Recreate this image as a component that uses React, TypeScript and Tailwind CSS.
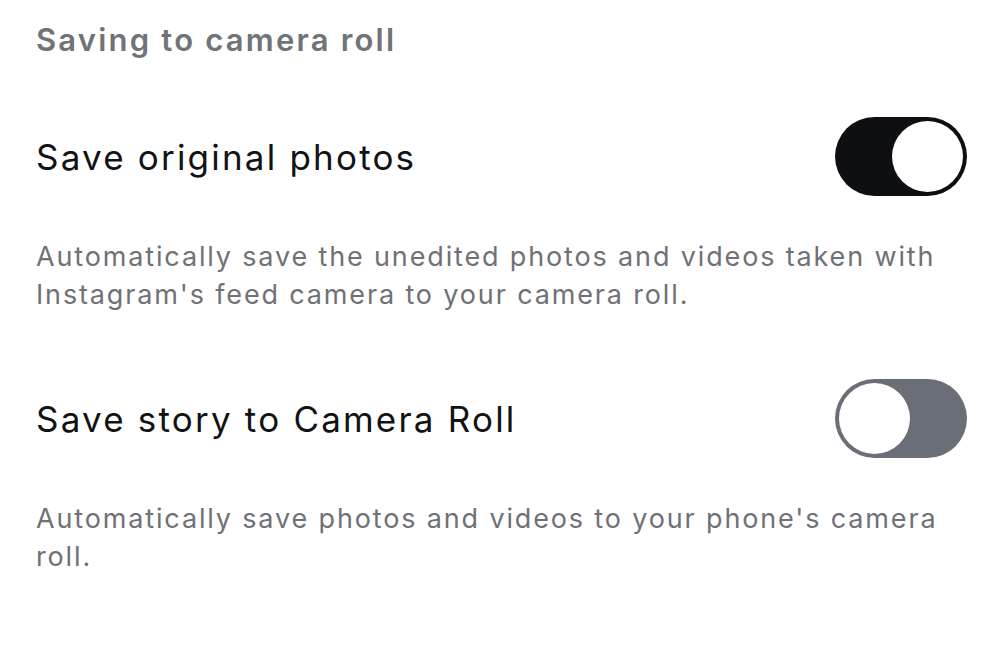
const Toggle = ({ on }: { on: boolean }) => {
  return (
    <div
      className={
        on
          ? "w-[132px] h-[79px] rounded-full bg-[#0d0f12] p-[4px] flex justify-end shrink-0"
          : "w-[132px] h-[79px] rounded-full bg-[#6a6e77] p-[4px] flex justify-start shrink-0"
      }
    >
      <div className="w-[71px] h-[71px] rounded-full bg-white"></div>
    </div>
  );
};

const SettingRow = ({ title, description, on, gap }: { title: string; description: string; on: boolean; gap: string }) => {
  return (
    <div className={gap}>
      <div className="flex items-center justify-between">
        <span className="text-[35px] leading-[44px] text-[#111214] tracking-[2.2px]">{title}</span>
        <Toggle on={on} />
      </div>
      <p className="mt-[42px] text-[27px] leading-[38px] text-[#6f7176] tracking-[1.85px] pr-[14px]">{description}</p>
    </div>
  );
};

export default function App() {
  return (
    <div className="w-[1000px] h-[648px] bg-white pl-[36px] pr-[33px] pt-[22px] overflow-hidden" style={{ fontFamily: "Inter, 'Noto Sans', sans-serif" }}>
      <h2 className="text-[31px] leading-[36px] font-semibold text-[#707378] tracking-[2.2px]">Saving to camera roll</h2>
      <SettingRow
        gap="mt-[59px]"
        on={true}
        title="Save original photos"
        description="Automatically save the unedited photos and videos taken with Instagram's feed camera to your camera roll."
      />
      <SettingRow
        gap="mt-[65px]"
        on={false}
        title="Save story to Camera Roll"
        description="Automatically save photos and videos to your phone's camera roll."
      />
    </div>
  );
}
